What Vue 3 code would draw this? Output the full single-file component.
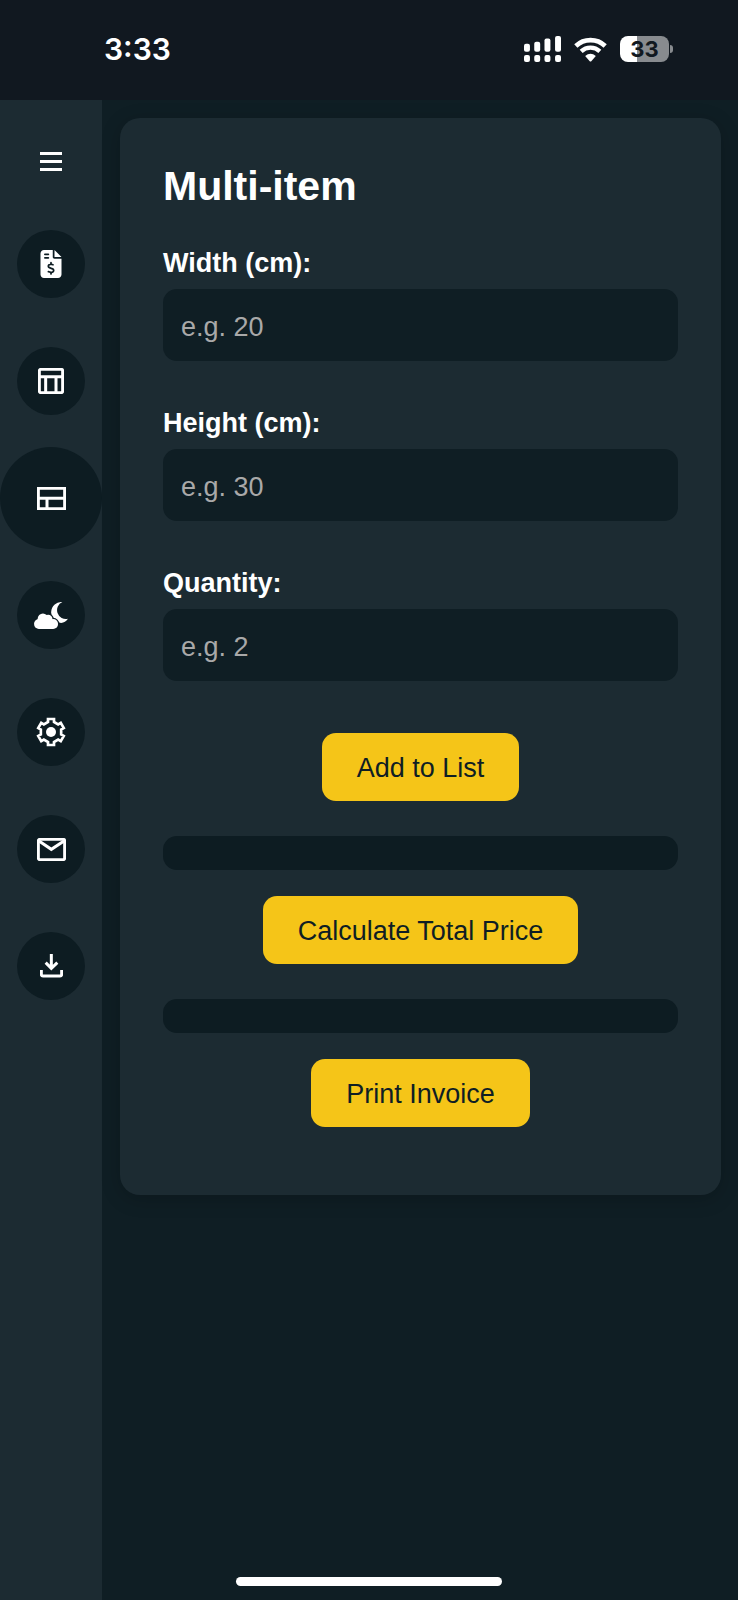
<script setup>
import { ref } from 'vue'

const fields = [
  { id: 'width', label: 'Width (cm):', placeholder: 'e.g. 20' },
  { id: 'height', label: 'Height (cm):', placeholder: 'e.g. 30' },
  { id: 'quantity', label: 'Quantity:', placeholder: 'e.g. 2' }
]
const values = ref({ width: '', height: '', quantity: '' })

// Outline of a six-toothed cog centred on 0,0
const gearPoints = Array.from({ length: 6 }, (_, i) => {
  const a = (i * Math.PI) / 3
  return [[-9, -30], [-9, -39], [9, -39], [9, -30]]
    .map(([x, y]) => [
      (x * Math.cos(a) - y * Math.sin(a)).toFixed(2),
      (x * Math.sin(a) + y * Math.cos(a)).toFixed(2)
    ].join(','))
    .join(' ')
}).join(' ')
</script>

<template>
  <div class="screen">
    <header class="status">
      <time class="clock">3:33</time>
      <div class="indicators">
        <svg class="signal" viewBox="0 0 112 78" aria-hidden="true">
          <rect x="0" y="23" width="18" height="24" rx="6" />
          <rect x="31" y="17" width="18" height="30" rx="6" />
          <rect x="62" y="7" width="18" height="40" rx="6" />
          <rect x="94" y="0" width="18" height="47" rx="6" />
          <rect x="0" y="57" width="18" height="21" rx="6" />
          <rect x="31" y="57" width="18" height="21" rx="6" />
          <rect x="62" y="57" width="18" height="21" rx="6" />
          <rect x="94" y="57" width="18" height="21" rx="6" />
        </svg>
        <svg class="wifi" viewBox="0 0 98 75" aria-hidden="true">
          <path d="M5 27 A64 64 0 0 1 93 27" fill="none" stroke="#fff" stroke-width="14" />
          <path d="M21 43 A41 41 0 0 1 77 43" fill="none" stroke="#fff" stroke-width="13" />
          <path d="M33 57 Q49 44 65 57 L52 72 Q49 75 46 72 Z" />
        </svg>
        <div class="battery"><span class="cell">33</span><span class="nub"></span></div>
      </div>
    </header>

    <div class="body">
      <nav class="sidebar" aria-label="Main">
        <button class="menu" type="button" aria-label="Menu">
          <svg width="22" height="20" viewBox="0 0 22 20"><path d="M0 0H22V3H0ZM0 8H22V11H0ZM0 16H22V19H0Z" /></svg>
        </button>
        <button class="item" type="button" aria-label="Invoice">
          <svg width="22" height="28" viewBox="0 0 384 512"><path d="M64 0C28.7 0 0 28.7 0 64V448c0 35.3 28.7 64 64 64H320c35.3 0 64-28.7 64-64V160H256c-17.7 0-32-14.3-32-32V0H64zM256 0V128H384L256 0zM64 80c0-8.800 7.200-16 16-16h64c8.800 0 16 7.200 16 16s-7.200 16-16 16H80c-8.800 0-16-7.200-16-16zm0 64c0-8.800 7.200-16 16-16h64c8.800 0 16 7.200 16 16s-7.200 16-16 16H80c-8.800 0-16-7.200-16-16zm128 72c8.800 0 16 7.200 16 16v17.300c8.500 1.200 16.700 3.100 24.100 5.100c8.500 2.300 13.600 11 11.300 19.600s-11 13.600-19.600 11.300c-11.100-3-22-5.200-32.100-5.300c-8.400-.1-17.400 1.800-23.600 5.500c-5.700 3.400-8.100 7.300-8.100 12.800c0 3.700 1.300 6.500 7.300 10.100c6.900 4.100 16.600 7.100 29.200 10.900l.5 .1c11.300 3.400 25.300 7.600 36.300 14.600c12.100 7.600 22.400 19.700 22.700 38.200c.3 19.300-9.600 33.300-22.900 41.600c-7.700 4.800-16.400 7.600-25.100 9.100V440c0 8.800-7.200 16-16 16s-16-7.200-16-16V422.200c-11.200-2.100-21.700-5.700-30.900-8.900c-2.100-.7-4.200-1.400-6.200-2.100c-8.400-2.800-12.900-11.900-10.100-20.200s11.900-12.900 20.200-10.100c2.500 .8 4.800 1.600 7.100 2.400c13.600 4.600 24.600 8.400 36.300 8.700c9.100 .3 17.900-1.700 23.700-5.300c5.100-3.200 7.900-7.300 7.800-14c-.1-4.600-1.800-7.800-7.700-11.600c-6.800-4.300-16.500-7.400-29-11.200l-1.600-.5c-11-3.300-24.300-7.300-34.800-13.700c-12-7.200-22.600-18.900-22.700-37.300c-.1-19.400 10.800-32.800 23.800-40.500c7.500-4.400 15.800-7.200 24.100-8.700V232c0-8.800 7.200-16 16-16z" /></svg>
        </button>
        <button class="item" type="button" aria-label="Table">
          <svg class="line" width="26" height="26" viewBox="0 0 78 78"><rect x="4" y="4" width="70" height="70" rx="5" /><path d="M4 26H74M23 26V74M54 26V74" /></svg>
        </button>
        <button class="item active" type="button" aria-label="Multi-item" aria-current="page">
          <svg class="line" width="29" height="23" viewBox="0 0 87 69"><path d="M4 4H83V65H4ZM4 34H83M30 34V65" /></svg>
        </button>
        <button class="item" type="button" aria-label="Night mode">
          <svg width="34" height="27" viewBox="0 0 103 82">
            <path d="M86 0A32 32 0 1 0 82 64Q95 62 103 51A27 27 0 0 1 86 0Z" />
            <g class="gap"><circle cx="14" cy="67" r="14" /><circle cx="27" cy="51" r="16" /><circle cx="43" cy="52" r="12" /><circle cx="58" cy="67" r="14" /></g>
            <g><circle cx="15" cy="67" r="15" /><circle cx="27" cy="51" r="16" /><circle cx="43" cy="52" r="13" /><circle cx="58" cy="67" r="15" /><rect x="14" y="54" width="44" height="28" /></g>
          </svg>
        </button>
        <button class="item" type="button" aria-label="Settings">
          <svg width="30" height="30" viewBox="-45 -45 90 90"><polygon class="cog" :points="gearPoints" /><circle r="15" /></svg>
        </button>
        <button class="item" type="button" aria-label="Mail">
          <svg class="line" width="29" height="23" viewBox="0 0 87 69"><rect x="4" y="4" width="79" height="61" rx="5" /><path d="M6 9L43 34L81 9" /></svg>
        </button>
        <button class="item" type="button" aria-label="Download">
          <svg class="line" width="23" height="24" viewBox="0 0 69 72"><path d="M34 0V45M17 26L34 43L52 26M4 48V61Q4 66 9 66H60Q65 66 65 61V48" /></svg>
        </button>
      </nav>

      <main class="content">
        <form class="card" @submit.prevent>
          <h1>Multi-item</h1>
          <div class="fields">
            <div v-for="f in fields" :key="f.id" class="field">
              <label :for="f.id">{{ f.label }}</label>
              <input :id="f.id" v-model="values[f.id]" type="text" inputmode="numeric" :placeholder="f.placeholder" />
            </div>
          </div>
          <button class="action" type="submit">Add to List</button>
          <div class="result"></div>
          <button class="action" type="button">Calculate Total Price</button>
          <div class="result"></div>
          <button class="action" type="button">Print Invoice</button>
        </form>
      </main>
    </div>
    <div class="home"></div>
  </div>
</template>

<style>
body {
  background: #0f1e24;
}
</style>

<style scoped>
.screen {
  position: relative;
  display: flex;
  flex-direction: column;
  min-height: 100vh;
  background: #0f1e24;
  color: #fff;
  font-family: "Liberation Sans", Arial, sans-serif;
}
.screen * {
  box-sizing: border-box;
}
svg {
  display: block;
  fill: #fff;
}
button {
  border: 0;
  padding: 0;
  font: inherit;
  cursor: pointer;
}
.status {
  display: flex;
  align-items: center;
  justify-content: space-between;
  height: 100px;
  padding: 0 65px 2px 104px;
  background: #111820;
  font-family: Inter, sans-serif;
}
.clock {
  font-size: 30px;
  font-weight: 600;
}
.indicators {
  display: flex;
  align-items: center;
  gap: 13px;
}
.signal {
  width: 37px;
  height: 26px;
}
.wifi {
  width: 33px;
  height: 25px;
}
.battery {
  display: flex;
  align-items: center;
  gap: 1px;
}
.cell {
  width: 49px;
  height: 26px;
  border-radius: 8px;
  background: linear-gradient(90deg, #fff 34%, #888b8f 34%);
  color: #111820;
  font-size: 22px;
  font-weight: 700;
  line-height: 26px;
  text-align: center;
}
.nub {
  width: 3px;
  height: 8px;
  border-radius: 0 4px 4px 0;
  background: #888b8f;
}
.body {
  display: flex;
  flex: 1;
}
.sidebar {
  display: flex;
  flex: none;
  flex-direction: column;
  align-items: center;
  gap: 49px;
  width: 102px;
  padding-top: 42px;
  background: #1c2b32;
}
.sidebar button {
  display: flex;
  align-items: center;
  justify-content: center;
}
.menu {
  width: 40px;
  height: 39px;
  background: none;
}
.item {
  width: 68px;
  height: 68px;
  border-radius: 50%;
  background: #0d1c22;
}
.active {
  width: 102px;
  height: 102px;
  margin: -17px 0;
}
.line {
  fill: none;
  stroke: #fff;
  stroke-width: 9;
}
.gap {
  stroke: #0d1c22;
  stroke-width: 10;
}
.cog {
  fill: none;
  stroke: #fff;
  stroke-width: 8;
}
.content {
  flex: 1;
  min-width: 0;
  padding: 18px 17px 18px 18px;
}
.card {
  display: flex;
  flex-direction: column;
  align-items: center;
  padding: 44px 43px 68px;
  border-radius: 20px;
  background: #1c2b32;
  box-shadow: 0 4px 20px rgba(0, 0, 0, 0.2);
  font-size: 27px;
}
h1 {
  align-self: stretch;
  margin: 0 0 38px;
  font-size: 41px;
  line-height: 48px;
}
.fields {
  display: flex;
  flex-direction: column;
  align-self: stretch;
  gap: 47px;
  margin-bottom: 52px;
}
.field {
  display: flex;
  flex-direction: column;
  gap: 10px;
}
label {
  font-weight: 700;
  line-height: 31px;
}
input {
  width: 100%;
  height: 72px;
  padding: 4px 18px 0;
  border: 0;
  border-radius: 14px;
  background: #0f1e24;
  color: #fff;
  font: inherit;
}
input::placeholder {
  color: #a9a9a9;
  opacity: 1;
}
.action {
  height: 68px;
  padding: 2px 35px 0;
  border-radius: 14px;
  background: #f5c518;
  color: #0f1e24;
}
.result {
  align-self: stretch;
  height: 34px;
  margin: 35px 0 26px;
  border-radius: 14px;
  background: #0d1c22;
}
.home {
  position: absolute;
  bottom: 14px;
  left: 32%;
  right: 32%;
  height: 9px;
  border-radius: 5px;
  background: #fff;
}
</style>
